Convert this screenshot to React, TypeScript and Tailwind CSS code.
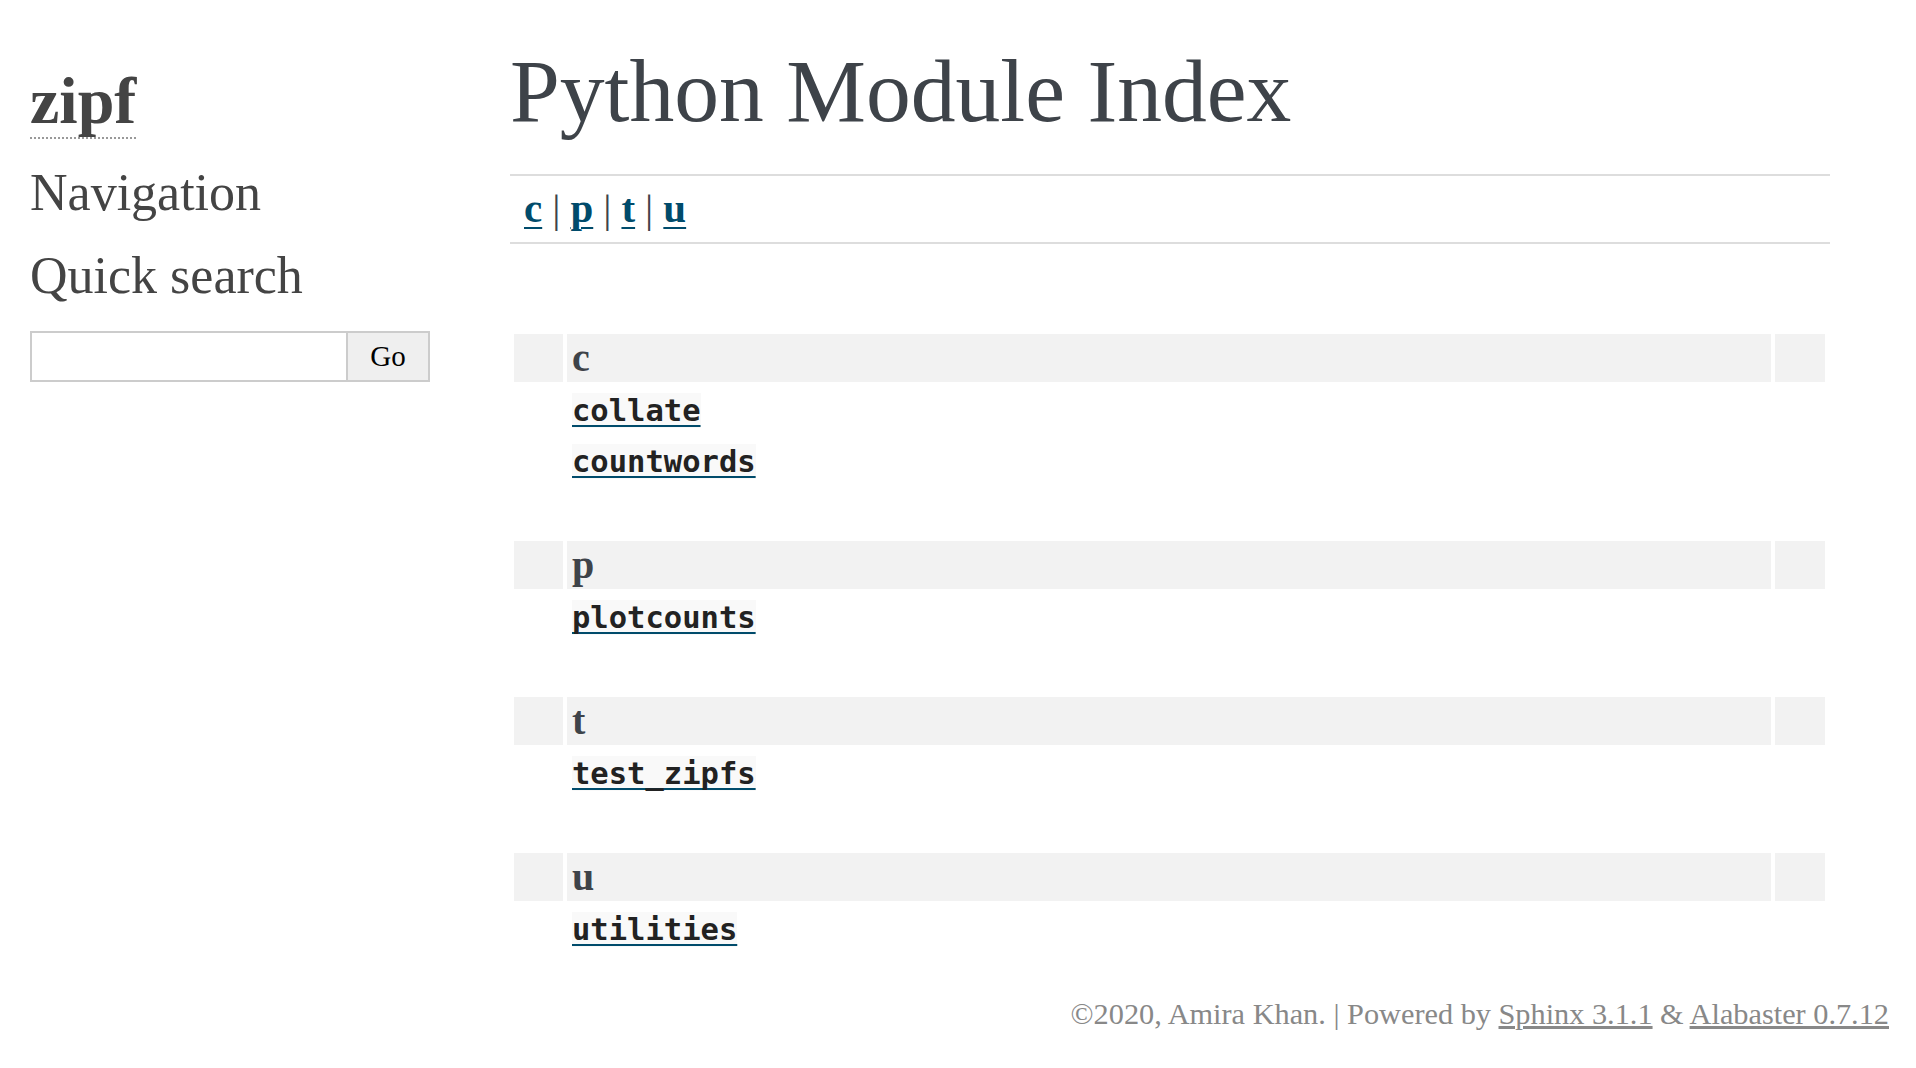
const serif = "font-['Liberation_Serif',Georgia,serif]";
const mono = "font-['DejaVu_Sans_Mono',monospace]";

const groups = [
  { letter: "c", modules: ["collate", "countwords"] },
  { letter: "p", modules: ["plotcounts"] },
  { letter: "t", modules: ["test_zipfs"] },
  { letter: "u", modules: ["utilities"] },
];

function Sidebar() {
  return (
    <aside className={`w-[400px] shrink-0 pt-[68px] flex flex-col text-[#444] ${serif}`}>
      <h1 className="text-[66px] font-bold leading-none">
        <a href="#" className="border-b-2 border-dotted border-[#999]">zipf</a>
      </h1>
      <h3 className="mt-[33px] text-[52px] leading-none">Navigation</h3>
      <h3 className="mt-[31px] text-[52px] leading-none">Quick search</h3>
      <form className="mt-[29px] flex h-[51px]">
        <input
          type="text"
          className="w-[318px] h-full border-2 border-[#ccc] bg-white outline-none"
        />
        <button
          type="button"
          className="w-[82px] h-full border-2 border-l-0 border-[#ccc] bg-[#efefef] text-[29px] text-black"
        >
          Go
        </button>
      </form>
    </aside>
  );
}

function Jumpbox() {
  return (
    <div className="mt-[38px] h-[70px] border-y-2 border-[#ddd] pl-[14px] pt-[8px] text-[41px] leading-[48px] text-[#3E4349]">
      {groups.map((g, i) => (
        <span key={g.letter}>
          {i > 0 && <span className="mx-[10px]">|</span>}
          <a href="#" className="font-bold text-[#004B6B] underline decoration-2 underline-offset-[5px]">
            {g.letter}
          </a>
        </span>
      ))}
    </div>
  );
}

function ModuleTable() {
  return (
    <table className="mt-[86px] w-[1319px] border-separate border-spacing-[4px]">
      <tbody>
        {groups.map((g, gi) => (
          <>
            <tr key={g.letter + "-cap"} className="bg-[#f2f2f2] h-[48px]">
              <td className="w-[49px]" />
              <td className="px-[5px] align-middle">
                <strong className="text-[40px] leading-[48px] text-[#3E4349]">{g.letter}</strong>
              </td>
              <td className="w-[50px]" />
            </tr>
            {g.modules.map((m) => (
              <tr key={m} className="h-[47px]">
                <td />
                <td className="px-[5px] pt-[3px] align-middle">
                  <a
                    href="#"
                    className={`${mono} bg-[#f9f9f9] text-[30.5px] leading-[44px] font-bold text-[#222] underline decoration-[#004B6B] decoration-2 underline-offset-[4px] [text-decoration-skip-ink:none]`}
                  >
                    {m}
                  </a>
                </td>
                <td />
              </tr>
            ))}
            {gi < groups.length - 1 && (
              <tr key={g.letter + "-pcap"} className="h-[49px]">
                <td colSpan={3} />
              </tr>
            )}
          </>
        ))}
      </tbody>
    </table>
  );
}

export default function App() {
  return (
    <div className={`min-h-screen bg-white pl-[30px] pr-[27px] ${serif}`}>
      <div className="flex">
        <Sidebar />
        <main className="ml-[80px] w-[1320px] pt-[46px]">
          <h1 className="text-[89.6px] leading-none font-normal text-[#3E4349]">Python Module Index</h1>
          <Jumpbox />
          <ModuleTable />
        </main>
      </div>
      <footer className="mt-[43px] text-right text-[30.3px] leading-none text-[#888]">
        ©2020, Amira Khan. | Powered by{" "}
        <a href="#" className="underline">Sphinx 3.1.1</a> &amp;{" "}
        <a href="#" className="underline">Alabaster 0.7.12</a>
      </footer>
    </div>
  );
}
